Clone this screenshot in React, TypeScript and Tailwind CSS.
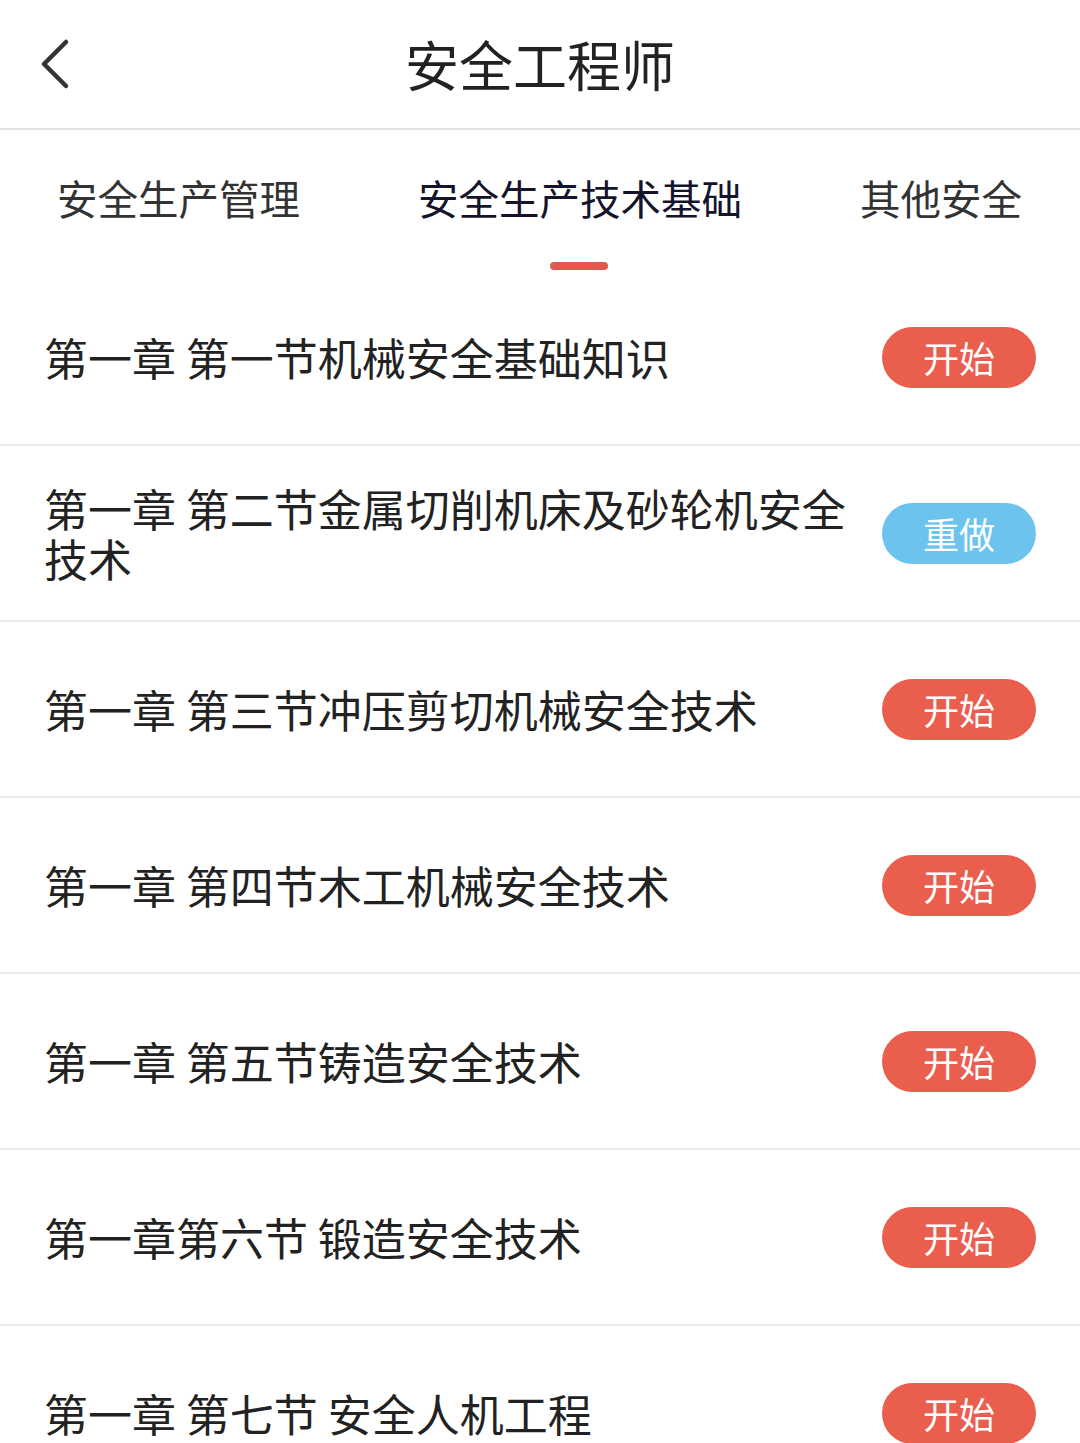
import React from "react";

const font = {
  fontFamily: '"Noto Sans CJK SC", "Noto Sans", sans-serif',
};

type Chapter = {
  title: string;
  done?: boolean;
};

const chapters: Chapter[] = [
  { title: "第一章 第一节机械安全基础知识" },
  { title: "第一章 第二节金属切削机床及砂轮机安全技术", done: true },
  { title: "第一章 第三节冲压剪切机械安全技术" },
  { title: "第一章 第四节木工机械安全技术" },
  { title: "第一章 第五节铸造安全技术" },
  { title: "第一章第六节 锻造安全技术" },
  { title: "第一章 第七节 安全人机工程" },
];

function BackIcon() {
  return (
    <svg width="32" height="52" viewBox="0 0 32 52" fill="none">
      <path
        d="M26 4 L4 26 L26 48"
        stroke="#333"
        strokeWidth="4.5"
        strokeLinecap="round"
        strokeLinejoin="round"
      />
    </svg>
  );
}

function ChapterRow({ title, done }: Chapter) {
  return (
    <div className="flex h-[176px] items-center gap-[20px] border-b-2 border-[#ececec] px-[44px]">
      <div className="flex-1 text-[44px] leading-[50px] text-[#222]">{title}</div>
      <button
        className={
          done
            ? "flex h-[61px] w-[154px] shrink-0 items-center justify-center rounded-full bg-[#6cc4ee] text-[36px] text-white"
            : "flex h-[61px] w-[154px] shrink-0 items-center justify-center rounded-full bg-[#e95e4c] text-[36px] text-white"
        }
      >
        {done ? "重做" : "开始"}
      </button>
    </div>
  );
}

export default function App() {
  return (
    <div className="min-h-screen w-full overflow-hidden bg-white" style={font}>
      {/* header */}
      <div className="relative flex h-[130px] items-center justify-center border-b-2 border-[#e3e3e3]">
        <div className="absolute left-[40px] top-[38px]">
          <BackIcon />
        </div>
        <h1 className="text-[54px] font-normal leading-none text-[#222]">安全工程师</h1>
      </div>

      {/* tabs */}
      <div className="flex h-[140px] flex-col">
        <div className="flex gap-[118px] whitespace-nowrap pl-[57px] pt-[43px] text-[40.5px] leading-[49px]">
          <span className="text-[#333]">安全生产管理</span>
          <span className="text-[#14142b]">安全生产技术基础</span>
          <span className="text-[#333]">其他安全</span>
        </div>
        <div className="mt-[40px] flex pl-[550px]">
          <div className="h-[8px] w-[58px] rounded-full bg-[#e0594c]" />
        </div>
      </div>

      {/* chapter list */}
      <div className="flex flex-col">
        {chapters.map((c) => (
          <ChapterRow key={c.title} title={c.title} done={c.done} />
        ))}
      </div>
    </div>
  );
}
